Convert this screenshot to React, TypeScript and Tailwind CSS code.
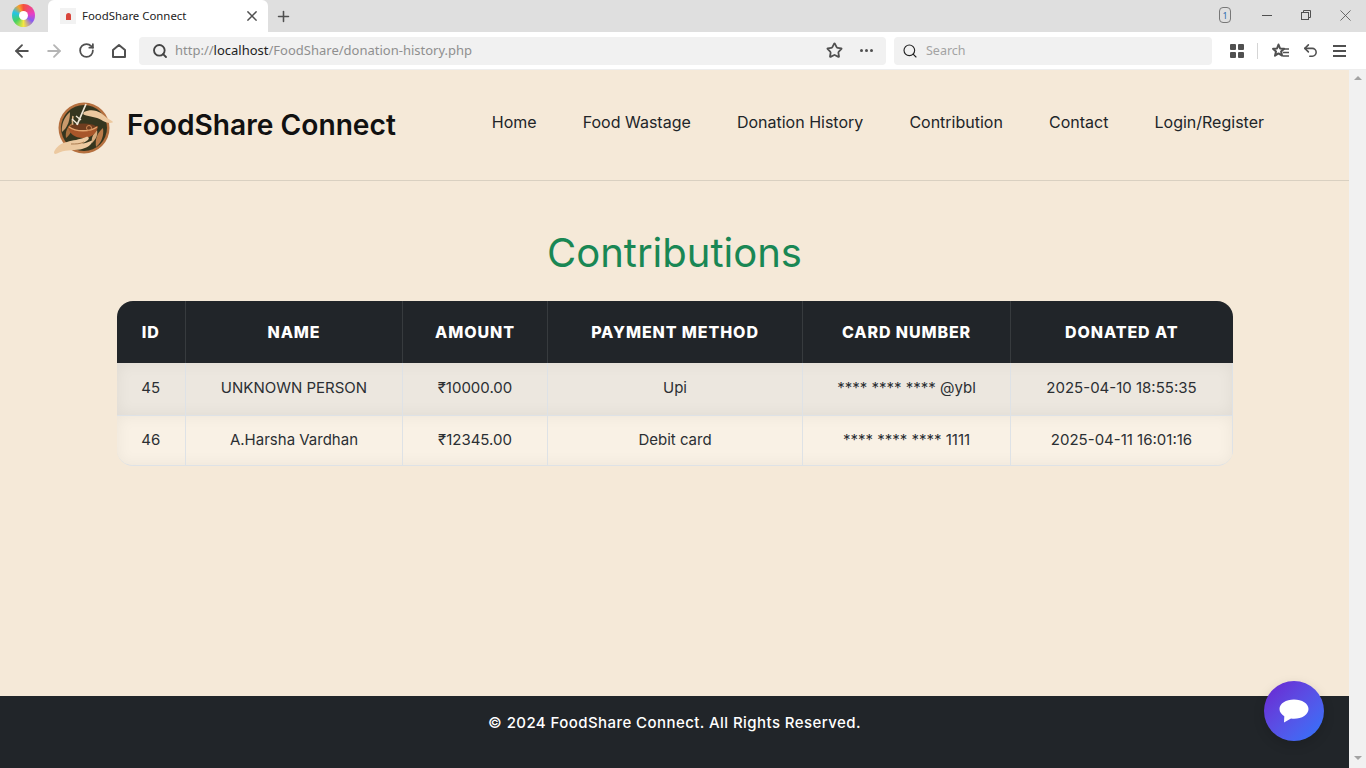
import { ArrowLeft, ArrowRight, RotateCw, Search, Star, Plus, Undo2 } from 'lucide-react';

const inter = { fontFamily: 'Inter, sans-serif' };

const navLinks = ['Home', 'Food Wastage', 'Donation History', 'Contribution', 'Contact', 'Login/Register'];

const columns = [
  { label: 'ID', width: 'w-[69px]' },
  { label: 'NAME', width: 'w-[217px]' },
  { label: 'AMOUNT', width: 'w-[145px]' },
  { label: 'PAYMENT METHOD', width: 'w-[255px]' },
  { label: 'CARD NUMBER', width: 'w-[208px]' },
  { label: 'DONATED AT', width: 'w-[222px]' },
];

const donations = [
  ['45', 'UNKNOWN PERSON', '₹10000.00', 'Upi', '**** **** **** @ybl', '2025-04-10 18:55:35'],
  ['46', 'A.Harsha Vardhan', '₹12345.00', 'Debit card', '**** **** **** 1111', '2025-04-11 16:01:16'],
];

function BrowserLogo() {
  return (
    <div className="flex h-[23px] w-[23px] shrink-0 items-center justify-center rounded-full bg-[conic-gradient(#f4503c,#e83ec4_22%,#8a5cf0_34%,#f5e642_50%,#46d160_65%,#22c4e8_80%,#f7a02c_92%,#f4503c)]">
      <div className="h-[9px] w-[9px] rounded-full bg-white" />
    </div>
  );
}

function HomeIcon() {
  return (
    <svg width="16" height="16" viewBox="0 0 16 16" fill="none" stroke="#505050" strokeWidth="2" strokeLinejoin="round">
      <path d="M2 14V7l6-5 6 5v7z" />
    </svg>
  );
}

function AppsIcon() {
  return (
    <svg width="14" height="14" viewBox="0 0 14 14" fill="#505050">
      <rect x="0" y="0" width="6" height="6" rx="1" />
      <rect x="8" y="0" width="6" height="6" rx="1" />
      <rect x="0" y="8" width="6" height="6" rx="1" />
      <rect x="8" y="8" width="6" height="6" rx="1" />
    </svg>
  );
}

function FavListIcon() {
  return (
    <svg width="17" height="16" viewBox="0 0 17 16" fill="none" stroke="#505050" strokeWidth="2" strokeLinejoin="round">
      <path d="M6.500 1.500l1.600 4 4 .3-3 2.700 1 4.200-3.600-2.300L3 12.700l1-4.200-3-2.700 4-.3z" />
      <path d="M10.500 6H17M11 9.500h6M11 13h6" strokeWidth="1.600" />
    </svg>
  );
}

function RestoreIcon() {
  return (
    <svg width="10" height="10" viewBox="0 0 10 10" fill="none" stroke="#505050">
      <rect x="0.5" y="2.5" width="7" height="7" />
      <path d="M2.500 2.500v-2h7v7h-2" />
    </svg>
  );
}

function CloseIcon({ size, width }: { size: number; width: number }) {
  return (
    <svg width={size} height={size} viewBox="0 0 12 12" fill="none" stroke="#505050" strokeWidth={width}>
      <path d="M0.500 0.500l11 11M11.500 0.500l-11 11" />
    </svg>
  );
}

// ざっくり描いたロゴ: 皿を囲む両手とフォーク、葉
function SiteLogo() {
  return (
    <svg width="60" height="52" viewBox="0 0 60 52" className="shrink-0">
      <circle cx="31" cy="26" r="25.500" fill="#b5703f" />
      <circle cx="31" cy="26" r="23" fill="#35361f" />
      <path d="M9 30c-1-7 2-15 8-20 0 8-2 15-8 20z" fill="#c99a6c" />
      <path d="M13 36c-1-6 1-11 6-15 1 6-1 11-6 15z" fill="#a9713f" />
      <path d="M20 14c-1 4-1 7 0 10" fill="none" stroke="#d9b184" strokeWidth="1.500" />
      <path d="M50 26c1 7-1 14-7 19-1-8 1-14 7-19z" fill="#b97b4a" />
      <path d="M44 28c1 5-1 9-5 13-1-5 1-9 5-13z" fill="#d6ab7c" />
      <path d="M15 24c8 3 22 3 30 0-1 8-7 12-15 12s-14-4-15-12z" fill="#a8562a" />
      <ellipse cx="30" cy="25" rx="13" ry="3.500" fill="#6f3d1f" />
      <path d="M16 25c7 5 21 5 28 0" fill="none" stroke="#e3a56f" strokeWidth="1.400" />
      <path d="M33 2L24 23" stroke="#f0e8d8" strokeWidth="1.700" />
      <path d="M19 17l6 5.500M23 14l5 4" stroke="#f0e8d8" strokeWidth="1.400" />
      <circle cx="36" cy="26" r="2.500" fill="none" stroke="#d08a55" strokeWidth="1" />
      <path d="M31 10c6-3 12-2 17 1 4 3 7 6 11 8 1 .6 1 1.500 0 1.800-4 .6-8-1-11-3-5-3-11-3-17-5-1-.5-1-2 0-2.800z" fill="#ecc9a0" />
      <path d="M1 50c2-5 7-9 13-10 6-2 12-2 19-5 2-1 4 1 2 3-2 1.500-4 2.500-6 3.500 3 0 7-1.500 10-3 1 4-6 8-12 9-8 1-15 0-23 4-2 1-3 .5-3-1.500z" fill="#ecc9a0" />
      <path d="M18 42c5 0 9 0 13-2" fill="none" stroke="#9a6a3e" strokeWidth=".8" />
    </svg>
  );
}

function ChatBubble() {
  return (
    <svg width="30" height="24" viewBox="0 0 30 24" fill="#fff">
      <path d="M15 0.500C7 0.500 0.500 4.500 0.500 10c0 3 2 5.500 4.800 7.200L5 23.500l7-4c1 .2 2 .3 3 .3 8 0 14.500-4.300 14.500-9.800S23 0.500 15 0.500z" />
    </svg>
  );
}

function BrowserChrome() {
  return (
    <div className="shrink-0" style={{ fontFamily: '"Noto Sans", sans-serif' }}>
      <div className="flex h-8 items-end bg-[#dfdfdf]">
        <div className="flex h-8 w-12 items-center justify-center pb-0.5 pr-px">
          <BrowserLogo />
        </div>
        <div className="flex h-8 w-[220px] items-center rounded-t-md bg-white pl-3 pr-[11px]">
          <div className="flex h-4 w-4 items-center justify-center bg-[#f2f2f2]">
            <div className="h-[7px] w-[5px] rounded-t-full bg-[#d9463c]" />
          </div>
          <span className="ml-[6px] flex-1 text-[11.400px] text-[#222]">FoodShare Connect</span>
          <CloseIcon size={10} width={1.8} />
        </div>
        <div className="flex h-8 w-[31px] items-center justify-center">
          <Plus size={17} strokeWidth={2.200} className="text-[#505050]" />
        </div>
        <div className="flex h-8 flex-1 items-center justify-end pb-[2px] pr-[15px]">
          <div className="mr-[31px] flex h-4 w-3 items-center justify-center rounded-sm border border-[#777] text-[9px] leading-none text-[#2b6cb0]">
            1
          </div>
          <div className="mr-[29px] h-px w-[10px] bg-[#505050]" />
          <div className="mr-[29px]">
            <RestoreIcon />
          </div>
          <CloseIcon size={11} width={0.9} />
        </div>
      </div>
      <div className="flex h-[38px] items-center border-b border-[#eeeeee] bg-white pl-[12px] pr-[18px]">
        <ArrowLeft size={20} strokeWidth={2.200} className="text-[#505050]" />
        <ArrowRight size={20} strokeWidth={2.200} className="ml-[12px] text-[#b5b5b5]" />
        <RotateCw size={17} strokeWidth={2.500} className="ml-[14px] text-[#505050]" />
        <div className="ml-4">
          <HomeIcon />
        </div>
        <div className="ml-[12px] flex h-7 w-[747px] items-center rounded bg-[#f1f1f1] pl-[13px] pr-3">
          <Search size={16} strokeWidth={2.800} className="text-[#444]" />
          <span className="ml-[7px] flex-1 text-[13px] text-[#8f8f8f]">
            http://<span className="text-[#222]">localhost</span>/FoodShare/donation-history.php
          </span>
          <Star size={17} strokeWidth={2.500} className="text-[#505050]" />
          <span className="ml-[17px] mr-[1px] flex gap-[2px]">
            <i className="h-[3px] w-[3px] rounded-full bg-[#505050]" />
            <i className="h-[3px] w-[3px] rounded-full bg-[#505050]" />
            <i className="h-[3px] w-[3px] rounded-full bg-[#505050]" />
          </span>
        </div>
        <div className="ml-2 flex h-7 w-[318px] items-center rounded bg-[#f1f1f1] pl-2">
          <Search size={16} strokeWidth={1.700} className="text-[#222]" />
          <span className="ml-2 pt-px text-[12.500px] text-[#a3a3a3]">Search</span>
        </div>
        <div className="ml-[18px]">
          <AppsIcon />
        </div>
        <div className="ml-[13px] h-4 w-px bg-[#d5d5d5]" />
        <div className="ml-[14px]">
          <FavListIcon />
        </div>
        <Undo2 size={17} strokeWidth={2.200} className="ml-[13px] text-[#505050]" />
        <div className="ml-[14px] flex w-[13px] flex-col gap-[3px]">
          <i className="h-[2px] bg-[#505050]" />
          <i className="h-[2px] bg-[#505050]" />
          <i className="h-[2px] bg-[#505050]" />
        </div>
      </div>
    </div>
  );
}

function DonationTable() {
  return (
    <div className="mx-auto w-[1116px] overflow-hidden rounded-2xl border-b border-[#dee2e6]">
      <table className="w-full table-fixed border-collapse text-center text-[15px] text-[#2b2f33]">
        <thead>
          <tr className="h-[62px] bg-[#212529] text-white">
            {columns.map((col, i) => (
              <th
                key={col.label}
                className={`${col.width} border-r border-[#373b3e] text-base font-extrabold tracking-[0.9px] ${
                  i === columns.length - 1 ? 'border-r-0' : ''
                }`}
              >
                {col.label}
              </th>
            ))}
          </tr>
        </thead>
        <tbody>
          {donations.map((row, r) => (
            <tr
              key={row[0]}
              className={`shadow-[inset_0_0_16px_rgba(0,0,0,0.06)] ${r === 0 ? 'h-[52px] bg-[#ece7df]' : 'h-[50px] bg-[#f9f1e5]'}`}
            >
              {row.map((cell, i) => (
                <td
                  key={i}
                  className={`border-r border-[#dee2e6] font-normal ${r === 0 ? 'border-b pb-[2px]' : 'pb-[1px]'}`}
                >
                  {cell}
                </td>
              ))}
            </tr>
          ))}
        </tbody>
      </table>
    </div>
  );
}

export default function App() {
  return (
    <div className="flex h-screen flex-col overflow-hidden" style={inter}>
      <BrowserChrome />
      <div className="flex min-h-0 flex-1">
        <div className="relative flex min-w-0 flex-1 flex-col bg-[#f5e9d8]">
          <header className="flex h-[111px] shrink-0 items-center justify-between border-b border-[#d9d0c1] pl-[53px] pr-[85px]">
            <div className="flex items-center gap-[14px]">
              <div className="pt-[5px]">
                <SiteLogo />
              </div>
              <span className="text-[28.160px] font-semibold leading-none text-[#111]">FoodShare Connect</span>
            </div>
            <nav className="flex gap-[46.100px] pb-[7px] text-base text-[#212529]">
              {navLinks.map((link) => (
                <span key={link}>{link}</span>
              ))}
            </nav>
          </header>
          <main className="flex-1">
            <h1 className="mt-[48px] mb-[24px] text-center text-[40px] font-normal leading-[48px] text-[#198754]">
              Contributions
            </h1>
            <DonationTable />
          </main>
          <footer className="flex h-[72px] shrink-0 items-start justify-center bg-[#212529] pt-[16px] text-[15px] font-medium tracking-[0.430px] text-white">
            © 2024 FoodShare Connect. All Rights Reserved.
          </footer>
          <div className="absolute bottom-[27px] right-[25px] flex h-[60px] w-[60px] items-center justify-center rounded-full bg-gradient-to-br from-[#6a1fd0] to-[#2575fc] shadow-[0_4px_12px_rgba(0,0,0,0.15)]">
            <ChatBubble />
          </div>
        </div>
        <div className="flex w-[17px] shrink-0 flex-col items-center justify-between bg-[#f1f1f1] py-[6px]">
          <div className="h-0 w-0 border-x-[4px] border-b-[4px] border-x-transparent border-b-[#a3a3a3]" />
          <div className="mb-[2px] h-0 w-0 border-x-[4px] border-t-[4px] border-x-transparent border-t-[#a3a3a3]" />
        </div>
      </div>
    </div>
  );
}
